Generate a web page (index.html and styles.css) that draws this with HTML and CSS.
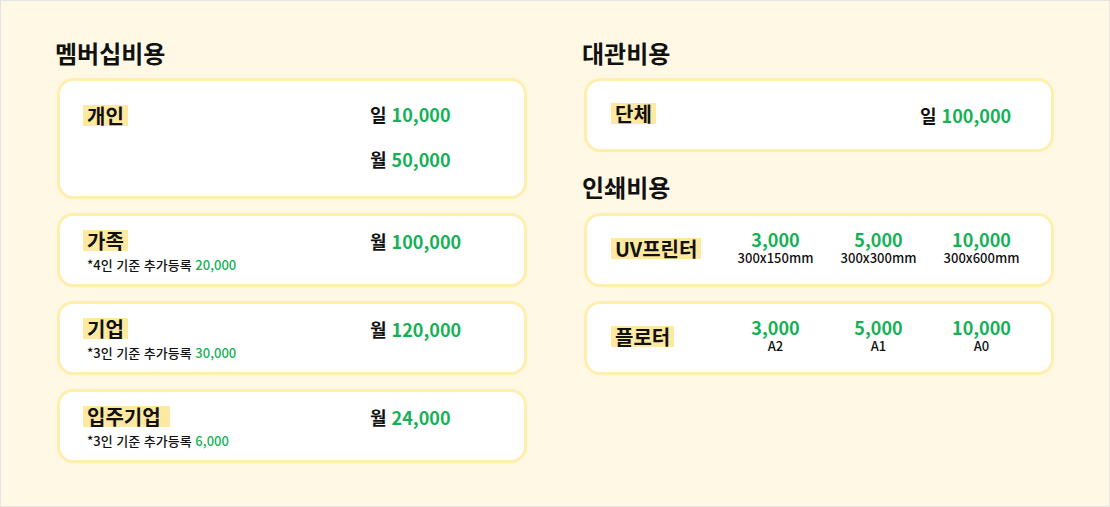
FILE: index.html
```html
<!DOCTYPE html>
<html lang="ko">
<head>
    <meta charset="UTF-8">
    <meta name="viewport" content="width=device-width, initial-scale=1.0">
    <title>이용요금</title>
    <link rel="stylesheet" href="styles.css">
</head>
<body>
    <div class="page">
        <!-- 왼쪽: 멤버십 -->
        <section class="col">
            <h2 class="title">멤버십비용</h2>
            <div class="list">
                <div class="card card-tall">
                    <div class="name"><span class="tag">개인</span></div>
                    <div class="prices">
                        <p class="price">일 <b>10,000</b></p>
                        <p class="price">월 <b>50,000</b></p>
                    </div>
                </div>
                <div class="card">
                    <div class="name">
                        <span class="tag">가족</span>
                        <p class="note">*4인 기준 추가등록 <b>20,000</b></p>
                    </div>
                    <div class="prices">
                        <p class="price">월 <b>100,000</b></p>
                    </div>
                </div>
                <div class="card">
                    <div class="name">
                        <span class="tag">기업</span>
                        <p class="note">*3인 기준 추가등록 <b>30,000</b></p>
                    </div>
                    <div class="prices">
                        <p class="price">월 <b>120,000</b></p>
                    </div>
                </div>
                <div class="card">
                    <div class="name">
                        <span class="tag">입주기업&nbsp;</span>
                        <p class="note">*3인 기준 추가등록 <b>6,000</b></p>
                    </div>
                    <div class="prices">
                        <p class="price">월 <b>24,000</b></p>
                    </div>
                </div>
            </div>
        </section>

        <!-- 오른쪽: 대관 / 인쇄 -->
        <section class="col">
            <h2 class="title">대관비용</h2>
            <div class="list">
                <div class="card card-center">
                    <div class="name name-wide"><span class="tag">단체</span></div>
                    <div class="prices">
                        <p class="price">일 <b>100,000</b></p>
                    </div>
                </div>
            </div>

            <h2 class="title title-next">인쇄비용</h2>
            <div class="list">
                <div class="card card-center">
                    <div class="name name-print"><span class="tag">UV프린터</span></div>
                    <div class="opt"><b>3,000</b><span>300x150mm</span></div>
                    <div class="opt"><b>5,000</b><span>300x300mm</span></div>
                    <div class="opt"><b>10,000</b><span>300x600mm</span></div>
                </div>
                <div class="card card-center">
                    <div class="name name-print"><span class="tag">플로터</span></div>
                    <div class="opt"><b>3,000</b><span>A2</span></div>
                    <div class="opt"><b>5,000</b><span>A1</span></div>
                    <div class="opt"><b>10,000</b><span>A0</span></div>
                </div>
            </div>
        </section>
    </div>
</body>
</html>
```

FILE: styles.css
```css
* {
    margin: 0;
    padding: 0;
    box-sizing: border-box;
}

body {
    font-family: "Noto Sans CJK KR", "Noto Sans", sans-serif;
    color: #111;
    background: #fff;
}

.page {
    width: 1110px;
    height: 507px;
    border: 1px solid #e4e4e4;
    background: #fef8e4;
    padding: 37px 55px 0 56px;
    display: flex;
    gap: 57px;
}

.col {
    width: 470px;
}

/* Titles */
.title {
    font-size: 24px;
    line-height: 30px;
    font-weight: 700;
    margin-left: -2px;
    margin-bottom: 10px;
}

.title-next {
    margin-top: 20px;
    margin-bottom: 11px;
}

/* Cards */
.list {
    display: flex;
    flex-direction: column;
    gap: 14px;
}

.card {
    display: flex;
    align-items: flex-start;
    height: 74px;
    background: #fff;
    border: 3px solid #ffeeac;
    border-radius: 16px;
    padding: 14px 23px 0;
}

.card-tall {
    height: 121px;
    padding-top: 24px;
}

.card-tall .prices {
    margin-top: -2px;
}

.card-center {
    align-items: center;
    padding-top: 0;
    padding-left: 24px;
}

.name {
    width: 287px;
    flex: none;
}

.name-wide {
    width: 309px;
}

.name-print {
    width: 113px;
}

.tag {
    display: inline-block;
    background: #ffe9a1;
    font-size: 20px;
    line-height: 21px;
    font-weight: 700;
    padding: 0 4px;
}

.note {
    margin-top: 2px;
    margin-left: 4px;
    font-size: 13px;
    line-height: 18px;
    font-weight: 500;
}

.note b,
.price b,
.opt b {
    color: #15b157;
}

.note b {
    font-weight: 500;
}

/* Prices */
.prices {
    display: flex;
    flex-direction: column;
    gap: 23px;
}

.price {
    font-size: 18px;
    line-height: 22px;
    font-weight: 700;
}

.price b {
    font-weight: 600;
}

.opt {
    width: 103px;
    flex: none;
    display: flex;
    flex-direction: column;
    align-items: center;
    margin-top: -4px;
}

.opt b {
    font-size: 18px;
    line-height: 19px;
    font-weight: 600;
}

.opt span {
    font-size: 13px;
    line-height: 17px;
    font-weight: 500;
}
```
